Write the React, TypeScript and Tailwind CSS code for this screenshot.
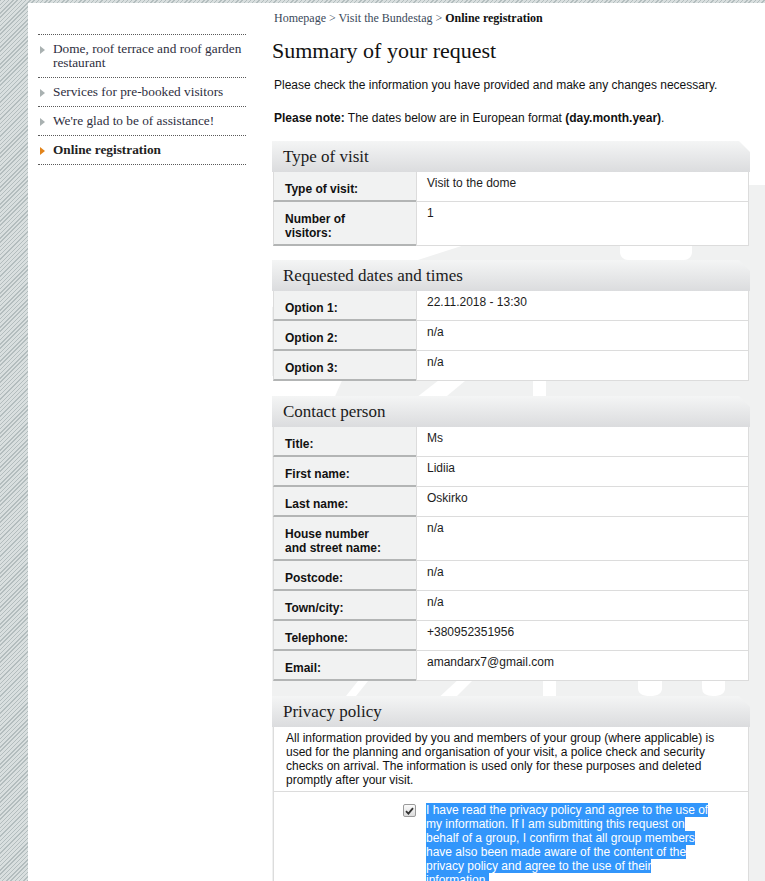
import React from "react";

const serif = { fontFamily: '"Liberation Serif", "Times New Roman", serif' };

function Header({ title }: { title: string }) {
  return (
    <div
      className="h-[31px] flex items-center pl-[11px] text-[17px] text-[#1b1b1b] bg-[linear-gradient(to_bottom,#f4f5f5,#dbdcde)] [clip-path:polygon(0_0,calc(100%-11px)_0,100%_11px,100%_100%,0_100%)]"
      style={serif}
    >
      {title}
    </div>
  );
}

function Row({ label, value }: { label: string; value: string }) {
  return (
    <div className="grid grid-cols-[143px_1fr]">
      <div className="bg-[#f1f2f2] border-l border-l-[#dcdcdc] border-b-2 border-b-[#b3b5b5] pl-[11px] pr-[28px] pt-[10px] pb-[4px] font-bold leading-[14px] text-[#111]">
        {label}
      </div>
      <div className="bg-white border-l border-r border-b border-[#dcdcdc] pl-[10px] pt-[4px] pb-[6px] leading-[14px] text-[#1c1c1c]">
        {value}
      </div>
    </div>
  );
}

function Section({ title, rows, tight }: { title: string; rows: [string, string][]; tight?: boolean }) {
  return (
    <div className={tight ? "w-[478px] -mb-[1px]" : "w-[478px]"}>
      <Header title={title} />
      <div className="ml-[1px] w-[476px]">
        {rows.map(([l, v]) => (
          <Row key={l} label={l} value={v} />
        ))}
      </div>
    </div>
  );
}

function Arrow({ active }: { active?: boolean }) {
  return (
    <svg className="absolute left-[2px] top-[11px]" width="5" height="8" viewBox="0 0 5 8">
      <polygon points="0,0 5,4 0,8" fill={active ? "#e2841b" : "#a9b1b1"} />
    </svg>
  );
}

function NavItem({ children, active }: { children: React.ReactNode; active?: boolean }) {
  return (
    <div className="relative border-b border-dotted border-b-[#5a5a5a] pl-[15px] py-[7px] leading-[14px]">
      <Arrow active={active} />
      <span className={active ? "font-bold text-[#222]" : "text-[#2e2e3e]"}>{children}</span>
    </div>
  );
}

function Watermark() {
  return (
    <svg
      className="absolute left-[244px] top-[177px] pointer-events-none"
      width="493"
      height="701"
      viewBox="0 0 493 701"
    >
      <path fill="#f0f1f1" d="M477 5 L493 5 L493 701 L0 701 L0 127 L208 60 L477 60 Z" />
      <rect x="348" y="52" width="72" height="28" rx="8" fill="#fff" />
      <polygon points="0,196 72,196 61,221 0,221" fill="#fff" />
      <polygon points="172,196 199,196 169,221 140,221" fill="#fff" />
      <rect x="261" y="196" width="13" height="20" fill="#fff" />
      <polygon points="90,496 100,496 80,521 70,521" fill="#fff" />
      <polygon points="190,496 205,496 180,521 163,521" fill="#fff" />
      <rect x="271" y="496" width="13" height="20" fill="#fff" />
      <path d="M366 496 L390 496 L390 508 Q390 516 378 516 Q366 516 366 508 Z" fill="#fff" />
      <path d="M430 496 L453 496 L453 508 Q453 516 441 516 Q430 516 430 508 Z" fill="#fff" />
    </svg>
  );
}

export default function App() {
  return (
    <div
      className="w-[765px] h-[881px] overflow-hidden bg-[repeating-linear-gradient(135deg,#b3bdbe_0px,#b3bdbe_1px,#d9dfdf_1px,#d9dfdf_3px)] text-[12px]"
      style={{ fontFamily: '"Liberation Sans", Arial, sans-serif' }}
    >
      <div className="relative ml-[28px] mt-[3px] h-[878px] bg-white flex">
        <Watermark />
        <div className="w-[218px] pl-[10px] pt-[31px] text-[13.3px]" style={serif}>
          <div className="border-t border-dotted border-t-[#5a5a5a]">
            <NavItem>
              Dome, roof terrace and roof garden
              <br />
              restaurant
            </NavItem>
            <NavItem>Services for pre-booked visitors</NavItem>
            <NavItem>We're glad to be of assistance!</NavItem>
            <NavItem active>Online registration</NavItem>
          </div>
        </div>
        <div className="relative ml-[26px] w-[478px]">
          <div className="mt-[8px] pl-[2px] leading-[14px] text-[12px] text-[#3b4a5a]" style={serif}>
            Homepage &gt; Visit the Bundestag &gt;{" "}
            <span className="font-bold text-[#111]">Online registration</span>
          </div>
          <h1 className="mt-[12px] text-[22px] leading-[28px] text-[#111]" style={serif}>
            Summary of your request
          </h1>
          <p className="mt-[13px] pl-[2px] leading-[14px] text-[#111]">
            Please check the information you have provided and make any changes necessary.
          </p>
          <p className="mt-[19px] pl-[2px] leading-[14px] text-[#111]">
            <b>Please note:</b> The dates below are in European format <b>(day.month.year)</b>.
          </p>
          <div className="mt-[16px] flex flex-col gap-[15px]">
            <Section
              tight
              title="Type of visit"
              rows={[
                ["Type of visit:", "Visit to the dome"],
                ["Number of visitors:", "1"],
              ]}
            />
            <Section
              title="Requested dates and times"
              rows={[
                ["Option 1:", "22.11.2018 - 13:30"],
                ["Option 2:", "n/a"],
                ["Option 3:", "n/a"],
              ]}
            />
            <Section
              title="Contact person"
              rows={[
                ["Title:", "Ms"],
                ["First name:", "Lidiia"],
                ["Last name:", "Oskirko"],
                ["House number and street name:", "n/a"],
                ["Postcode:", "n/a"],
                ["Town/city:", "n/a"],
                ["Telephone:", "+380952351956"],
                ["Email:", "amandarx7@gmail.com"],
              ]}
            />
            <div className="w-[478px]">
              <Header title="Privacy policy" />
              <div className="ml-[1px] w-[476px] bg-white border-l border-r border-[#dcdcdc]">
                <p className="pl-[12px] pr-[24px] pt-[4px] pb-[4px] leading-[14px] text-[#111] border-b border-[#dcdcdc]">
                  All information provided by you and members of your group (where applicable) is
                  used for the planning and organisation of your visit, a police check and security
                  checks on arrival. The information is used only for these purposes and deleted
                  promptly after your visit.
                </p>
                <div className="grid grid-cols-[142px_1fr] pb-[20px]">
                  <div className="flex justify-end pt-[12px]">
                    <div className="w-[13px] h-[13px] border border-[#9a9a9a] rounded-[2px] bg-[linear-gradient(to_bottom,#fbfbfb,#dcdcdc)] flex items-center justify-center">
                      <svg width="9" height="8" viewBox="0 0 9 8">
                        <path d="M1 4.2 L3.4 6.6 L8 1.2" stroke="#333" strokeWidth="1.8" fill="none" />
                      </svg>
                    </div>
                  </div>
                  <div className="pl-[10px] pt-[11px]">
                    <div className="w-[287px] leading-[14px]">
                      <span className="bg-[#3296fb] text-white">
                        I have read the privacy policy and agree to the use of my information. If I
                        am submitting this request on behalf of a group, I confirm that all group
                        members have also been made aware of the content of the privacy policy and
                        agree to the use of their information.
                      </span>
                    </div>
                  </div>
                </div>
              </div>
            </div>
          </div>
        </div>
      </div>
    </div>
  );
}
